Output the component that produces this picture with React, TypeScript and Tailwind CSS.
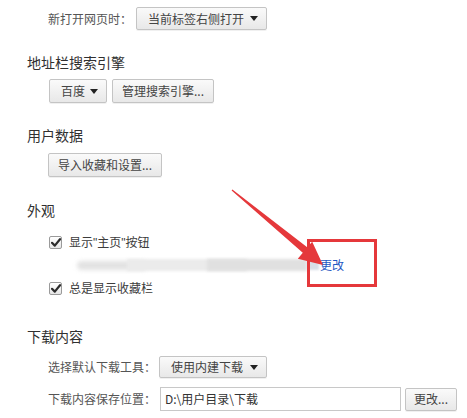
import React from "react";

const font = { fontFamily: '"Noto Sans CJK SC", "Noto Sans", sans-serif' };

function Caret() {
  return (
    <svg width="8" height="5" viewBox="0 0 8 5" className="shrink-0">
      <polygon points="0,0 8,0 4,5" fill="#222" />
    </svg>
  );
}

function Btn({ children, className = "" }: { children: React.ReactNode; className?: string }) {
  return (
    <div
      className={
        "flex items-center border border-[#c4c4c4] rounded-[2px] bg-gradient-to-b from-[#fafafa] to-[#e8e8e8] text-[#444] text-[12px] leading-none shadow-[0_1px_0_rgba(0,0,0,0.06)] " +
        className
      }
    >
      {children}
    </div>
  );
}

function Check() {
  return (
    <div className="w-[13px] h-[13px] border border-[#9a9a9a] rounded-[2px] bg-gradient-to-b from-[#ffffff] to-[#e6e6e6] flex items-center justify-center shrink-0">
      <svg width="10" height="9" viewBox="0 0 10 9">
        <path d="M1 4.8 L3.8 7.6 L9 1.2" stroke="#2a2a2a" strokeWidth="2.2" fill="none" strokeLinecap="round" strokeLinejoin="round" />
      </svg>
    </div>
  );
}

function Heading({ children, className = "" }: { children: React.ReactNode; className?: string }) {
  return (
    <div className={"pl-[27px] h-[20px] flex items-center text-[14px] text-[#303030] " + className}>{children}</div>
  );
}

const q = { fontFamily: '"Liberation Sans", sans-serif' };

export default function App() {
  return (
    <div className="relative w-[467px] h-[418px] bg-white overflow-hidden text-[12px] text-[#3c3c3c]" style={font}>
      {/* Row 1 */}
      <div className="mt-[7px] pl-[48px] h-[23px] flex items-center">
        <span className="w-[88px] text-[#555]">新打开网页时：</span>
        <Btn className="w-[131px] h-[23px] pl-[11px] pr-[8px] justify-between">
          <span>当前标签右侧打开</span>
          <Caret />
        </Btn>
      </div>

      <Heading className="mt-[22px]">地址栏搜索引擎</Heading>
      <div className="mt-[7px] pl-[49px] h-[24px] flex items-center gap-[5px]">
        <Btn className="w-[58px] h-[24px] pl-[11px] pr-[8px] justify-between">
          <span>百度</span>
          <Caret />
        </Btn>
        <Btn className="w-[102px] h-[24px] justify-center">
          <span>管理搜索引擎...</span>
        </Btn>
      </div>

      <Heading className="mt-[22px]">用户数据</Heading>
      <div className="mt-[8px] pl-[48px] h-[24px] flex items-center">
        <Btn className="w-[114px] h-[24px] justify-center">
          <span>导入收藏和设置...</span>
        </Btn>
      </div>

      <Heading className="mt-[23px]">外观</Heading>
      <div className="mt-[12px] pl-[49px] h-[20px] flex items-center gap-[7px]">
        <Check />
        <span>
          显示<span style={q}>"</span>主页<span style={q}>"</span>按钮
        </span>
      </div>
      <div className="mt-[3px] h-[20px] flex items-center">
        <div className="ml-[77px] w-[241px] h-[14px] relative">
          <div className="absolute left-0 top-[3px] w-[70px] h-[9px] rounded-full bg-[#e2e2e2] blur-[2px]" />
          <div className="absolute left-[50px] top-[1px] w-[120px] h-[12px] bg-[#ebebeb] blur-[1.5px]" />
          <div className="absolute left-[130px] top-[1px] w-[100px] h-[12px] bg-[#e0e0e0] blur-[1.5px]" />
          <div className="absolute left-[230px] top-[2px] w-[12px] h-[10px] bg-[#d8dde6] blur-[1px]" />
        </div>
        <span className="ml-[2px] text-[#1f58c2]">更改</span>
      </div>
      <div className="mt-[3px] pl-[49px] h-[20px] flex items-center gap-[7px]">
        <Check />
        <span>总是显示收藏栏</span>
      </div>

      <Heading className="mt-[28px]">下载内容</Heading>
      <div className="mt-[10px] pl-[48px] h-[22px] flex items-center">
        <span className="w-[111px] text-[#555]">选择默认下载工具：</span>
        <Btn className="w-[108px] h-[22px] pl-[11px] pr-[8px] justify-between">
          <span>使用内建下载</span>
          <Caret />
        </Btn>
      </div>
      <div className="mt-[9px] pl-[48px] h-[24px] flex items-center">
        <span className="w-[112px] text-[#555]">下载内容保存位置：</span>
        <div className="w-[241px] h-[24px] border border-[#c8c8c8] bg-white flex items-center pl-[4px] text-[#333]">
          D:\用户目录\下载
        </div>
        <Btn className="ml-[4px] w-[52px] h-[23px] justify-center">
          <span>更改...</span>
        </Btn>
      </div>

      {/* annotation overlay */}
      <div className="absolute left-[307px] top-[239px] w-[70px] h-[48px] border-[3px] border-[#e5383b] pointer-events-none" />
      <svg className="absolute left-0 top-0 pointer-events-none" width="467" height="418" viewBox="0 0 467 418">
        <polygon
          points="231.6,190.5 302.8,252.7 297.8,258.7 323,265 312.2,241.7 307.2,247.3 232.4,189.5"
          fill="#e5383b"
        />
      </svg>
    </div>
  );
}
